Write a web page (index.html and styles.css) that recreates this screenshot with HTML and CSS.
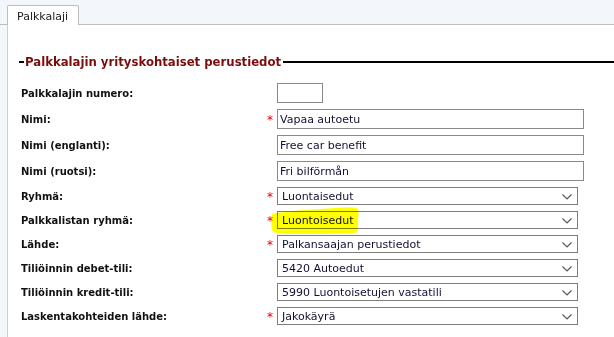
FILE: index.html
```html
<!DOCTYPE html>
<html lang="fi">
<head>
<meta charset="utf-8">
<title>Palkkalaji</title>
<link rel="stylesheet" href="styles.css">
</head>
<body>
<div class="tabbar">
  <div class="tab">Palkkalaji</div>
</div>
<div class="panel">
  <div class="legend">
    <span class="dash"></span>
    <span class="legend-text">Palkkalajin yrityskohtaiset perustiedot</span>
    <span class="rule"></span>
  </div>
  <div class="form">
    <label class="lbl">Palkkalajin numero:</label><span class="req"></span><div class="ctl"><input class="num" type="text" value=""></div>
    <label class="lbl">Nimi:</label><span class="req">*</span><div class="ctl"><input class="txt" type="text" value="Vapaa autoetu"></div>
    <label class="lbl">Nimi (englanti):</label><span class="req"></span><div class="ctl"><input class="txt" type="text" value="Free car benefit"></div>
    <label class="lbl">Nimi (ruotsi):</label><span class="req"></span><div class="ctl"><input class="txt" type="text" value="Fri bilförmån"></div>
    <label class="lbl">Ryhmä:</label><span class="req">*</span><div class="ctl"><div class="sel"><span>Luontaisedut</span><svg class="chev" width="10" height="6" viewBox="0 0 10 6"><path d="M0.5 0.5 L5 5 L9.5 0.5" fill="none" stroke="#555" stroke-width="1.1"/></svg></div></div>
    <label class="lbl">Palkkalistan ryhmä:</label><span class="req">*</span><div class="ctl hl-wrap"><div class="sel"><span>Luontoisedut</span><svg class="chev" width="10" height="6" viewBox="0 0 10 6"><path d="M0.5 0.5 L5 5 L9.5 0.5" fill="none" stroke="#555" stroke-width="1.1"/></svg></div><svg class="highlight" width="92" height="28" viewBox="0 0 92 28"><path d="M2 7 C10 5 30 3 50 2 C65 1 80 0 86 1 C89 2 89 6 88 12 C88 18 89 24 86 26 C70 27 40 27 20 27 C8 27 3 26 2 23 C1 17 1 11 2 7 Z" fill="#ffff00"/></svg></div>
    <label class="lbl">Lähde:</label><span class="req">*</span><div class="ctl"><div class="sel"><span>Palkansaajan perustiedot</span><svg class="chev" width="10" height="6" viewBox="0 0 10 6"><path d="M0.5 0.5 L5 5 L9.5 0.5" fill="none" stroke="#555" stroke-width="1.1"/></svg></div></div>
    <label class="lbl">Tiliöinnin debet-tili:</label><span class="req"></span><div class="ctl"><div class="sel"><span>5420 Autoedut</span><svg class="chev" width="10" height="6" viewBox="0 0 10 6"><path d="M0.5 0.5 L5 5 L9.5 0.5" fill="none" stroke="#555" stroke-width="1.1"/></svg></div></div>
    <label class="lbl">Tiliöinnin kredit-tili:</label><span class="req"></span><div class="ctl"><div class="sel"><span>5990 Luontoisetujen vastatili</span><svg class="chev" width="10" height="6" viewBox="0 0 10 6"><path d="M0.5 0.5 L5 5 L9.5 0.5" fill="none" stroke="#555" stroke-width="1.1"/></svg></div></div>
    <label class="lbl">Laskentakohteiden lähde:</label><span class="req">*</span><div class="ctl"><div class="sel"><span>Jakokäyrä</span><svg class="chev" width="10" height="6" viewBox="0 0 10 6"><path d="M0.5 0.5 L5 5 L9.5 0.5" fill="none" stroke="#555" stroke-width="1.1"/></svg></div></div>
  </div>
</div>
</body>
</html>
```
FILE: styles.css
```css
html, body {
  margin: 0;
  padding: 0;
  height: 100%;
}
body {
  background: #f3f6fa;
  font-family: "DejaVu Sans", Verdana, sans-serif;
  font-size: 10px;
  color: #111;
  overflow: hidden;
  display: flex;
  flex-direction: column;
}
.tabbar {
  height: 24px;
  border-bottom: 1px solid #bdbdbd;
  padding-left: 7px;
  display: flex;
  align-items: flex-end;
  flex: none;
}
.tab {
  width: 72px;
  height: 20px;
  box-sizing: border-box;
  background: #fff;
  border: 1px solid #bdbdbd;
  border-bottom: none;
  border-radius: 2px 2px 0 0;
  margin-bottom: -1px;
  padding: 4px 0 0 9px;
  font-size: 11px;
  color: #1a1a1a;
}
.panel {
  flex: 1;
  margin-left: 7px;
  border-left: 1px solid #cfcfcf;
  background: #fff;
  padding-top: 29px;
}
.legend {
  display: flex;
  align-items: center;
  padding-left: 11px;
  height: 16px;
}
.dash {
  width: 5px;
  height: 2px;
  background: #000;
}
.legend-text {
  font-weight: bold;
  font-size: 11.7px;
  color: #7a0c0c;
  padding: 0 2px 0 1px;
}
.rule {
  flex: 1;
  height: 2px;
  background: #000;
}
.form {
  display: grid;
  grid-template-columns: 246px 10px auto;
  row-gap: 6px;
  padding-left: 13px;
  margin-top: 13px;
  align-items: center;
}
.lbl {
  font-weight: bold;
  font-size: 10px;
  color: #111;
}
.req {
  color: #e00000;
  font-size: 12px;
  line-height: 10px;
  padding-top: 2px;
}
.ctl {
  display: flex;
}
input {
  font-family: inherit;
  font-size: 11px;
  color: #111133;
  border: 1px solid #8a8a8a;
  border-radius: 0;
  margin: 0;
  padding: 0 2px;
  height: 20px;
  box-sizing: border-box;
  outline: none;
}
.num {
  width: 46px;
}
.txt {
  width: 307px;
}
.sel {
  width: 301px;
  height: 18px;
  box-sizing: border-box;
  border: 1px solid #7e7e7e;
  background: #fff;
  display: flex;
  align-items: center;
  justify-content: space-between;
  padding: 0 5px 0 4px;
  font-size: 11px;
  color: #111133;
}
.chev {
  display: block;
  margin-top: 1px;
}
.hl-wrap {
  position: relative;
}
.highlight {
  position: absolute;
  left: -7px;
  top: -4px;
  mix-blend-mode: multiply;
  pointer-events: none;
}
```
